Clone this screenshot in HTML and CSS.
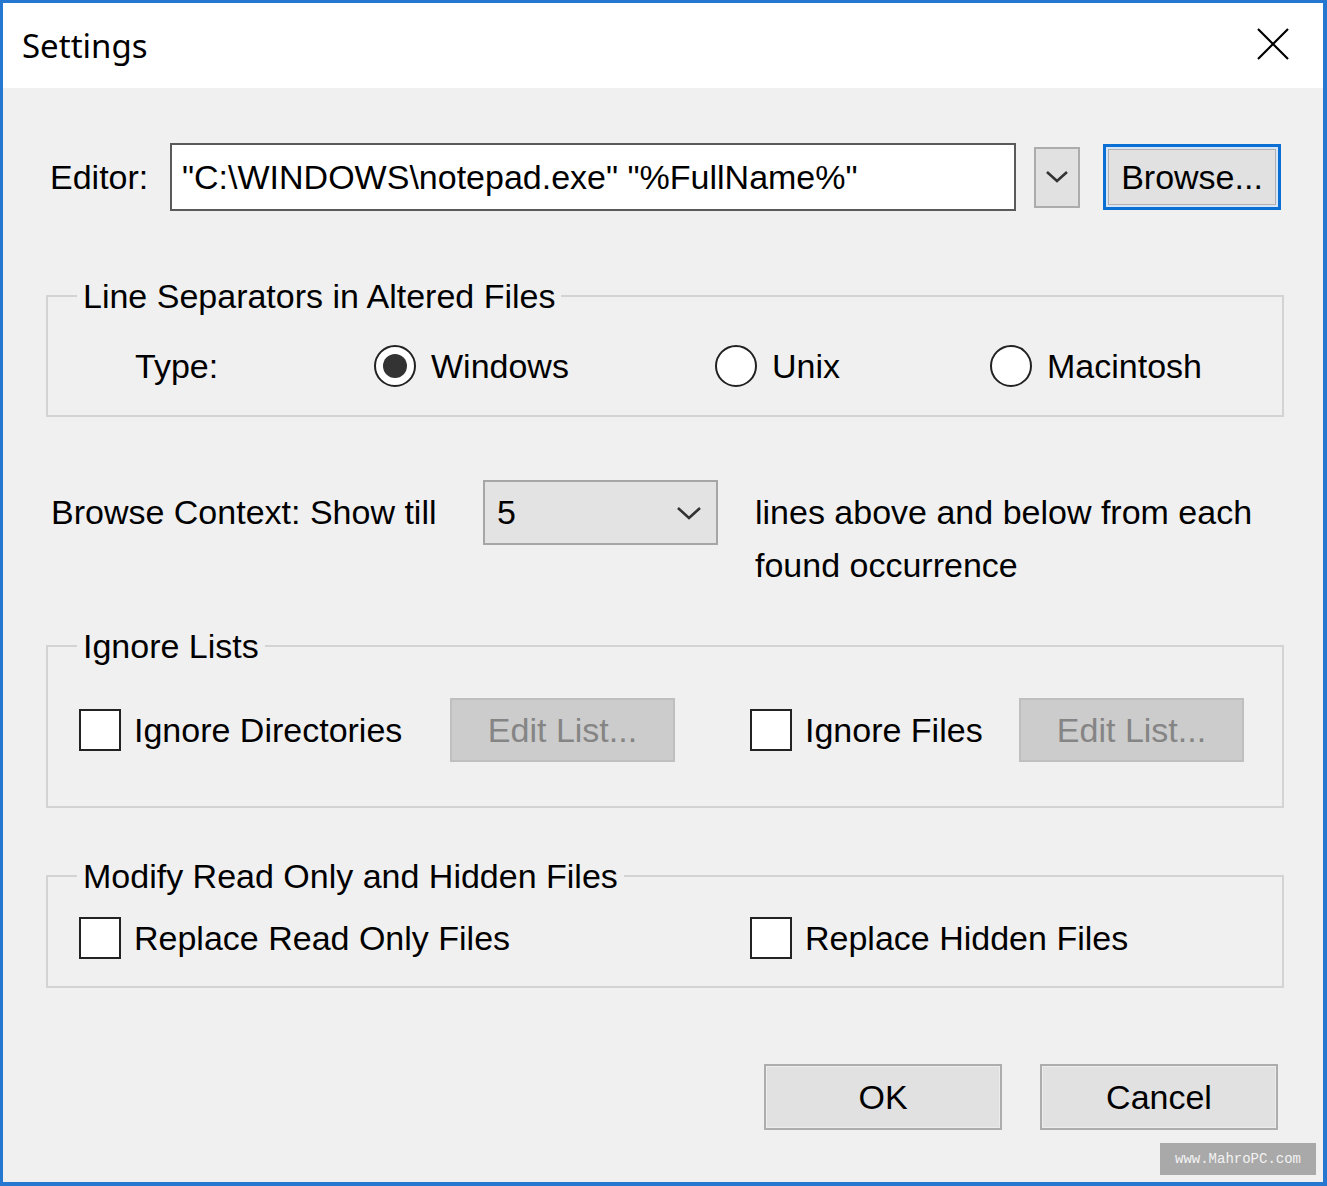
FILE: index.html
```html
<!DOCTYPE html>
<html lang="en">
<head>
    <meta charset="UTF-8">
    <meta name="viewport" content="width=device-width, initial-scale=1.0">
    <title>Settings</title>
    <link rel="stylesheet" href="styles.css">
</head>
<body>

    <div class="window">
        <!-- Title bar -->
        <div class="titlebar">
            <span class="title">Settings</span>
            <button class="close-btn" type="button">
                <svg width="32" height="32" viewBox="0 0 32 32">
                    <path d="M1 1 L31 31 M31 1 L1 31" stroke="#000" stroke-width="2.2" fill="none"/>
                </svg>
            </button>
        </div>

        <div class="content">
            <!-- Editor command line -->
            <div class="editor-row">
                <span class="editor-label">Editor:</span>
                <div class="path-box">"C:\WINDOWS\notepad.exe" "%FullName%"</div>
                <button class="drop-btn" type="button">
                    <svg width="24" height="14" viewBox="0 0 24 14">
                        <path d="M2 2 L12 11 L22 2" stroke="#333" stroke-width="2.6" fill="none"/>
                    </svg>
                </button>
                <button class="btn btn-browse" type="button">Browse...</button>
            </div>

            <!-- Line separators -->
            <fieldset class="group">
                <legend>Line Separators in Altered Files</legend>
                <div class="type-row">
                    <span class="type-label">Type:</span>
                    <label class="radio radio-windows"><span class="radio-mark checked"></span>Windows</label>
                    <label class="radio radio-unix"><span class="radio-mark"></span>Unix</label>
                    <label class="radio"><span class="radio-mark"></span>Macintosh</label>
                </div>
            </fieldset>

            <!-- Browse context -->
            <div class="context-row">
                <span class="context-label">Browse Context: Show till</span>
                <div class="select-box">
                    <span>5</span>
                    <svg width="26" height="14" viewBox="0 0 26 14">
                        <path d="M2 2 L13 12 L24 2" stroke="#333" stroke-width="2.6" fill="none"/>
                    </svg>
                </div>
                <div class="context-text">lines above and below from each<br>found occurrence</div>
            </div>

            <!-- Ignore lists -->
            <fieldset class="group">
                <legend>Ignore Lists</legend>
                <div class="ignore-row">
                    <label class="check check-dirs"><span class="check-box"></span>Ignore Directories</label>
                    <button class="btn btn-disabled" type="button" disabled>Edit List...</button>
                    <label class="check check-files"><span class="check-box"></span>Ignore Files</label>
                    <button class="btn btn-disabled" type="button" disabled>Edit List...</button>
                </div>
            </fieldset>

            <!-- Read only / hidden -->
            <fieldset class="group">
                <legend>Modify Read Only and Hidden Files</legend>
                <div class="modify-row">
                    <label class="check check-readonly"><span class="check-box"></span>Replace Read Only Files</label>
                    <label class="check"><span class="check-box"></span>Replace Hidden Files</label>
                </div>
            </fieldset>

            <div class="footer">
                <button class="btn btn-footer" type="button">OK</button>
                <button class="btn btn-footer" type="button">Cancel</button>
            </div>
        </div>

        <div class="watermark">www.MahroPC.com</div>
    </div>

</body>
</html>
```

FILE: styles.css
```css
body {
    margin: 0;
    font-family: 'Liberation Sans', Arial, sans-serif;
    font-size: 34px;
    color: #000;
    background: #f0f0f0;
}
.window {
    position: relative;
    width: 1327px;
    height: 1186px;
    box-sizing: border-box;
    border: 3px solid #2677cf;
    border-right-width: 4px;
    border-bottom-width: 4px;
    background: #f0f0f0;
    overflow: hidden;
}

/* title bar */
.titlebar {
    height: 85px;
    background: #fff;
    display: flex;
    align-items: center;
    justify-content: space-between;
    padding: 0 34px 0 19px;
}
.title {
    font-family: 'Noto Sans', 'Open Sans', sans-serif;
    font-size: 33px;
    margin-top: 0;
}
.close-btn {
    border: none;
    background: none;
    padding: 0;
    width: 32px;
    height: 32px;
    margin-top: -4px;
}

.content {
    padding: 0 39px 0 43px;
}

/* buttons */
.btn {
    font-family: inherit;
    font-size: 34px;
    color: #000;
    background: #e1e1e1;
    border: 2px solid #adadad;
    box-shadow: inset 0 0 0 1px #ececec;
    padding: 0;
}
.btn-browse {
    width: 178px;
    height: 66px;
    margin-left: 23px;
    border: 3px solid #0a6fd2;
    box-shadow: inset 0 0 0 2px #d6e6f6, inset 0 0 0 3px #b0b0b0;
}
.btn-disabled {
    width: 225px;
    height: 64px;
    background: #cccccc;
    border-color: #bfbfbf;
    box-shadow: none;
    color: #858585;
}
.btn-footer {
    width: 238px;
    height: 66px;
}

/* editor row */
.editor-row {
    display: flex;
    align-items: center;
    margin-top: 55px;
    height: 68px;
}
.editor-label {
    width: 120px;
    padding-left: 4px;
}
.path-box {
    width: 846px;
    height: 68px;
    box-sizing: border-box;
    border: 2px solid #5a5a5a;
    background: #fff;
    padding-left: 10px;
    display: flex;
    align-items: center;
    white-space: nowrap;
}
.drop-btn {
    width: 46px;
    height: 61px;
    margin-left: 18px;
    background: #e1e1e1;
    border: 2px solid #acacac;
    padding: 0;
    display: flex;
    align-items: center;
    justify-content: center;
}

/* group boxes */
.group {
    margin: 0;
    padding: 0;
    min-width: 0;
    border: 2px solid #d3d3d3;
}
.group legend {
    margin-left: 29px;
    padding: 0 6px;
    line-height: 40px;
}
.group:first-of-type {
    margin-top: 65px;
}

.type-row {
    display: flex;
    align-items: center;
    height: 50px;
    padding: 25px 0 24px 87px;
}
.type-label {
    width: 239px;
}
.radio {
    display: flex;
    align-items: center;
    gap: 15px;
}
.radio-windows {
    width: 341px;
}
.radio-unix {
    width: 275px;
}
.radio-mark {
    width: 42px;
    height: 42px;
    box-sizing: border-box;
    border: 2px solid #222;
    border-radius: 50%;
    background: #fff;
    display: flex;
    align-items: center;
    justify-content: center;
}
.radio-mark.checked::after {
    content: "";
    width: 24px;
    height: 24px;
    border-radius: 50%;
    background: #333;
}

/* browse context */
.context-row {
    display: flex;
    align-items: flex-start;
    margin-top: 63px;
    margin-bottom: 34px;
}
.context-label {
    width: 432px;
    padding-left: 5px;
    line-height: 65px;
}
.select-box {
    width: 235px;
    height: 65px;
    box-sizing: border-box;
    border: 2px solid #a6a6a6;
    background: #e3e3e3;
    display: flex;
    align-items: center;
    justify-content: space-between;
    padding: 0 14px 0 12px;
}
.context-text {
    margin-left: 37px;
    margin-top: 6px;
    line-height: 53px;
}

/* checkboxes */
.check {
    display: flex;
    align-items: center;
    gap: 13px;
}
.check-box {
    width: 42px;
    height: 42px;
    box-sizing: border-box;
    border: 2px solid #222;
    background: #fff;
}
.ignore-row {
    display: flex;
    align-items: center;
    height: 64px;
    padding: 32px 0 44px 31px;
}
.check-dirs {
    width: 371px;
}
.check-files {
    width: 269px;
    margin-left: 75px;
}
.group + .group {
    margin-top: 48px;
}
.modify-row {
    display: flex;
    align-items: center;
    height: 42px;
    padding: 21px 0 27px 31px;
}
.check-readonly {
    width: 671px;
}

/* dialog buttons */
.footer {
    display: flex;
    justify-content: flex-end;
    gap: 38px;
    margin-top: 76px;
    padding-right: 6px;
}

.watermark {
    position: absolute;
    right: 7px;
    bottom: 7px;
    width: 156px;
    height: 32px;
    background: #a9a9a9;
    color: #f2f2f2;
    font-family: 'Liberation Mono', monospace;
    font-size: 14px;
    display: flex;
    align-items: center;
    justify-content: center;
}
```
